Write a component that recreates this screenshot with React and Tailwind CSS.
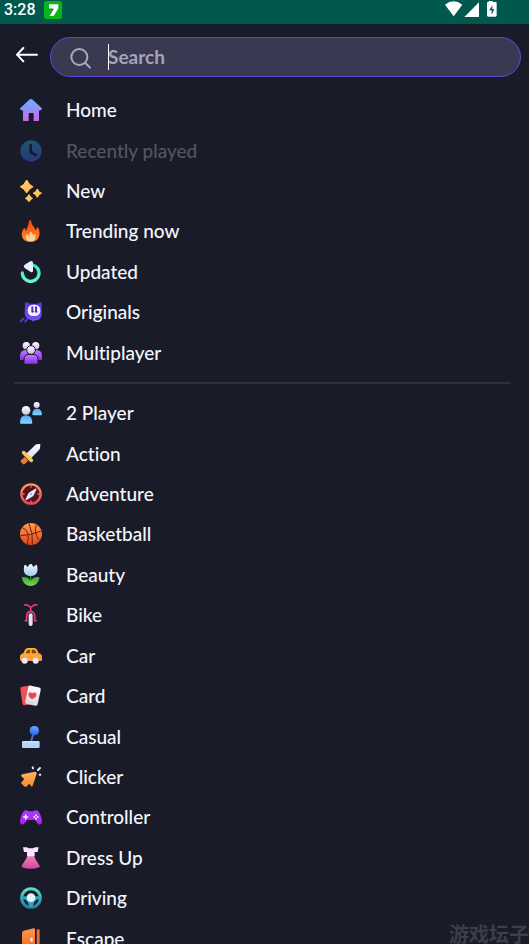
import React from "react";

const Gradient = ({ id, from, to, x2 = 0, y2 = 1 }) => (
  <linearGradient id={id} x1="0" y1="0" x2={x2} y2={y2}>
    <stop offset="0" stopColor={from} />
    <stop offset="1" stopColor={to} />
  </linearGradient>
);

// every menu drawing shares one 66 unit grid
const Icon = ({ children }) => (
  <svg viewBox="0 0 66 66" className="size-[22px] shrink-0" aria-hidden="true">
    {children}
  </svg>
);

const HomeIcon = () => (
  <Icon>
    <Gradient id="home" from="#62b4ff" to="#cb66ee" />
    <path fill="url(#home)" d="M28 2q5-4 10 0l26 24q4 4-1 7l-6 2v28q0 4-4 4H41V45q0-3-3-3H29q-3 0-3 3v22H13q-4 0-4-4V35l-6-2q-5-3-1-7Z" />
  </Icon>
);

const ClockIcon = () => (
  <Icon>
    <Gradient id="clock" from="#23536b" to="#233980" />
    <circle cx="33" cy="33" r="32" fill="url(#clock)" />
    <path d="M32 16v20l15 9" fill="none" stroke="#171a2c" strokeWidth="8" strokeLinecap="round" strokeLinejoin="round" />
  </Icon>
);

const SparklesIcon = () => (
  <Icon>
    <Gradient id="spark" from="#ffd35c" to="#ffb45c" x2={1} />
    <g fill="url(#spark)">
      <path d="M20 0q3 0 4 4 4 10 13 13 6 3 0 6-9 4-13 13-4 7-8 0-4-9-13-13-6-3 0-6 9-3 13-13 1-4 4-4Z" />
      <path d="M52 26q2 0 3 3 2 6 8 8 5 3 0 5-6 2-8 8-3 5-6 0-2-6-8-8-4-2 0-5 6-2 8-8 1-3 3-3Z" />
      <path d="M27 43q2 0 3 3 2 5 7 7 4 2 0 4-5 2-7 7-3 4-6 0-2-5-7-7-4-2 0-4 5-2 7-7 1-3 3-3Z" />
    </g>
  </Icon>
);

const FireIcon = () => (
  <Icon>
    <Gradient id="fire" from="#f4430f" to="#ff8b2b" />
    <Gradient id="flame" from="#ffc56d" to="#ffd9a4" />
    <path fill="url(#fire)" d="M30 1q4-1 4 4c1 11 10 15 13 26l4-8q2-3 4 0c10 21 0 43-23 43C9 66 1 49 7 33q2-5 5-8 3-2 4 2l2 6C23 22 25 14 27 4q1-3 3-3Z" />
    <path fill="url(#flame)" d="M31 35q2-2 4 1l5 10 4-4q2-1 2 2c2 12-3 19-14 19-12 0-17-8-13-19q2-3 4 0l3 3Z" />
  </Icon>
);

const UpdatedIcon = () => (
  <Icon>
    <Gradient id="upd" from="#37e6c4" to="#67f5ce" />
    <path d="M7 36a25 25 0 1 0 31-24" fill="none" stroke="url(#upd)" strokeWidth="10" strokeLinecap="round" />
    <path d="M14 11 31 1q8-3 8 5v23q0 7-7 4L14 21q-5-5 0-10Z" fill="#e4f0ff" />
  </Icon>
);

const OriginalsIcon = () => (
  <Icon>
    <Gradient id="orig" from="#5638e0" to="#7252ff" />
    <path fill="url(#orig)" d="M15 8q0-5 5-4l9 4h23l9-4q4-1 4 4v29c0 14-7 21-17 21q-6 0-8 3-4 2-5-4c-12-2-21-9-21-22Z" />
    <rect x="23" y="11" width="38" height="34" rx="16" fill="#f4f1ff" />
    <path d="M37 19v13m11-13v13" stroke="#4930bd" strokeWidth="6" strokeLinecap="round" />
    <path d="m39 31 4 2m7-2 3 2" stroke="#4930bd" strokeWidth="3" />
    <path d="m1 62 10-10m4 10 6-7" stroke="#5a3de0" strokeWidth="5" strokeLinecap="round" />
  </Icon>
);

const MultiplayerIcon = () => (
  <Icon>
    <Gradient id="mhead" from="#fff" to="#cbb7ee" />
    <Gradient id="mbody" from="#c180ff" to="#8929ec" />
    <g fill="url(#mhead)">
      <circle cx="19" cy="11" r="11" />
      <circle cx="47" cy="11" r="11" />
    </g>
    <path fill="url(#mbody)" d="M0 54V42q0-18 18-18h30q18 0 18 18v12Z" />
    <path fill="url(#mbody)" stroke="#1a1b28" strokeWidth="3" d="M12 67V53q0-16 16-16h10q16 0 16 16v14Z" />
    <circle cx="33" cy="24" r="13" fill="url(#mhead)" stroke="#1a1b28" strokeWidth="3" />
  </Icon>
);

const TwoPlayerIcon = () => (
  <Icon>
    <Gradient id="phead" from="#fff" to="#c9c7eb" />
    <Gradient id="pbody" from="#5aa6f3" to="#7cdbff" />
    <circle cx="18" cy="25" r="13" fill="url(#phead)" />
    <circle cx="50" cy="9" r="9" fill="url(#phead)" />
    <path fill="url(#pbody)" d="M0 62q0-22 18-22t19 22q0 3-3 3H3q-3 0-3-3Z" />
    <path fill="url(#pbody)" d="M37 37q0-17 14-17t15 17q0 3-3 3H40q-3 0-3-3Z" />
  </Icon>
);

const SwordIcon = () => (
  <Icon>
    <Gradient id="blade" from="#fff" to="#d3d8f2" />
    <path d="m14 42 11 11-11 10q-3 3-6-1l-5-4q-3-3 0-6Z" fill="#f17a28" />
    <path d="M18 33 45 7q3-3 6-3l7-1q4 0 3 4l-1 8q0 3-3 6L31 48Z" fill="url(#blade)" />
    <path d="m11 29 23 23" stroke="#ffc24f" strokeWidth="11" strokeLinecap="round" />
  </Icon>
);

const CompassIcon = () => (
  <Icon>
    <Gradient id="ring" from="#ff9a64" to="#e94855" />
    <circle cx="33" cy="33" r="29" fill="#521321" stroke="url(#ring)" strokeWidth="7" />
    <path d="M33 4v10m0 38v10M4 33h10m38 0h10" stroke="#e56a5b" strokeWidth="4" />
    <path d="M46 17q5-1 3 4L40 39 20 51q-5 1-3-4l9-18Z" fill="#e7e8fa" />
    <circle cx="33" cy="33" r="3" fill="#9fa0c6" />
  </Icon>
);

const BasketballIcon = () => (
  <Icon>
    <Gradient id="ball" from="#ff9a4d" to="#e4481c" />
    <circle cx="33" cy="33" r="33" fill="url(#ball)" />
    <path d="M2 38q30-1 62-14M27 1q13 30 10 65M7 14q25 9 15 49M49 5q-9 25 9 48" fill="none" stroke="#6b210f" strokeWidth="3" />
  </Icon>
);

const TulipIcon = () => (
  <Icon>
    <Gradient id="petal" from="#eefaff" to="#9fcbe4" />
    <Gradient id="leaf" from="#3aa83e" to="#78d84b" />
    <path d="M32 30v26" stroke="#3d9147" strokeWidth="4" />
    <path fill="url(#petal)" d="M13 4q2-4 5 0l5 5 6-8q3-3 6 0l6 8 5-5q3-4 5 0c5 20-2 32-19 32S8 24 13 4Z" />
    <path fill="url(#leaf)" d="M32 52c4-10 13-14 24-13q3 0 2 4C55 58 46 65 32 66 18 65 9 58 6 43q-1-4 2-4c11-1 20 3 24 13Z" />
  </Icon>
);

const BikeIcon = () => (
  <Icon>
    <g fill="none" stroke="#e83e78" strokeWidth="5" strokeLinecap="round" strokeLinejoin="round">
      <path d="M14 3q5-2 9 1l9 6 9-6q4-3 9-1M32 10v12M20 50V38q0-15 12-15t12 15v12" />
      <path d="M16 50h4m24 0h4" />
    </g>
    <rect x="26" y="28" width="12" height="38" rx="6" fill="#e4e2f3" />
  </Icon>
);

const CarIcon = () => (
  <Icon>
    <Gradient id="car" from="#ffb42e" to="#ff9b43" />
    <path fill="url(#car)" d="m10 25 5-11q3-5 9-5h18q6 0 9 5l5 11q10 2 10 11v8q0 4-4 4H4q-4 0-4-4v-9q0-8 10-10Z" />
    <path fill="#7c4713" d="m17 25 4-8q1-3 5-3h4v11Zm18-11h6q3 0 5 3l4 8H35Z" />
    <circle cx="14" cy="47" r="9" fill="#eceafa" />
    <circle cx="47" cy="47" r="9" fill="#eceafa" />
  </Icon>
);

const CardIcon = () => (
  <Icon>
    <Gradient id="card" from="#fff" to="#d8d6dc" />
    <rect x="4" y="3" width="36" height="56" rx="6" fill="#f0515a" transform="rotate(-8 22 31)" />
    <rect x="20" y="4" width="38" height="56" rx="6" fill="url(#card)" transform="rotate(12 39 32)" />
    <path d="M36 43q-14-9-10-18 4-6 11 0 8-6 12 1 3 9-13 17Z" fill="#ee4750" />
  </Icon>
);

const JoystickIcon = () => (
  <Icon>
    <Gradient id="knob" from="#65a9ff" to="#2963ee" />
    <path d="m41 18-8 31" stroke="#4a6fc4" strokeWidth="6" />
    <circle cx="43" cy="14" r="14" fill="url(#knob)" />
    <rect x="6" y="45" width="53" height="21" rx="4" fill="#b3d3fb" />
    <path d="M8 48h49" stroke="#d2e4ff" strokeWidth="4" />
  </Icon>
);

const ClickerIcon = () => (
  <Icon>
    <Gradient id="cursor" from="#ffb45c" to="#f08b2b" />
    <path fill="url(#cursor)" d="M7 25 44 17q7-1 6 6L38 59q-2 5-5 1l-5-7-9 9q-3 2-6-1l-8-7q-3-3 0-6l8-9-8-7q-4-5 2-7Z" />
    <path d="m38 4 1 3m15 5 6-6M59 26h2" stroke="#e5e9ff" strokeWidth="6" strokeLinecap="round" />
  </Icon>
);

const ControllerIcon = () => (
  <Icon>
    <Gradient id="pad" from="#a63bff" to="#b41dea" />
    <path fill="url(#pad)" d="M9 19q3-6 9-6 4 0 7 3h16q3-3 7-3 6 0 9 6c7 12 9 22 9 29 0 8-9 10-14 4l-5-7q-2-3-5-3H24q-3 0-5 3l-5 7C9 58 0 56 0 48c0-7 2-17 9-29Z" />
    <path d="M17 27v12m-6-6h12" stroke="#f7e6ff" strokeWidth="5" strokeLinecap="round" />
    <g fill="#f7e6ff">
      <circle cx="48" cy="28" r="3" />
      <circle cx="48" cy="38" r="3" />
      <circle cx="43" cy="33" r="3" />
      <circle cx="53" cy="33" r="3" />
    </g>
  </Icon>
);

const DressIcon = () => (
  <Icon>
    <Gradient id="skirt" from="#ef7fc0" to="#cc4b9b" />
    <path fill="url(#skirt)" d="M22 26h20c3 12 12 19 17 31q1 3-2 4-25 9-50 0-3-1-2-4C10 45 19 38 22 26Z" />
    <path fill="#fbe4ff" d="M9 1h11l6 3h13l6-3h11l-3 14h-9v13H21V15h-9Z" />
  </Icon>
);

const WheelIcon = () => (
  <Icon>
    <Gradient id="wheel" from="#58dfc5" to="#247ba7" />
    <circle cx="33" cy="33" r="28" fill="none" stroke="url(#wheel)" strokeWidth="9" />
    <path fill="#36a3b3" d="M7 28h52v8q-18 1-20 24H27Q25 37 7 36Z" />
    <circle cx="33" cy="32" r="13" fill="#def5ff" />
  </Icon>
);

const DoorIcon = () => (
  <Icon>
    <Gradient id="door" from="#ff9552" to="#ef6a1c" />
    <path fill="url(#door)" d="M6 14q0-5 5-6l30-7q4 0 4 4v61H6Z" />
    <rect x="50" y="4" width="9" height="62" rx="3" fill="#e96f2c" />
    <rect x="31" y="29" width="7" height="12" rx="3" fill="#ffe6cf" />
  </Icon>
);

const mainLinks = [
  { label: "Home", icon: HomeIcon },
  { label: "Recently played", icon: ClockIcon, disabled: true },
  { label: "New", icon: SparklesIcon },
  { label: "Trending now", icon: FireIcon },
  { label: "Updated", icon: UpdatedIcon },
  { label: "Originals", icon: OriginalsIcon },
  { label: "Multiplayer", icon: MultiplayerIcon },
];

const categories = [
  { label: "2 Player", icon: TwoPlayerIcon },
  { label: "Action", icon: SwordIcon },
  { label: "Adventure", icon: CompassIcon },
  { label: "Basketball", icon: BasketballIcon },
  { label: "Beauty", icon: TulipIcon },
  { label: "Bike", icon: BikeIcon },
  { label: "Car", icon: CarIcon },
  { label: "Card", icon: CardIcon },
  { label: "Casual", icon: JoystickIcon },
  { label: "Clicker", icon: ClickerIcon },
  { label: "Controller", icon: ControllerIcon },
  { label: "Dress Up", icon: DressIcon },
  { label: "Driving", icon: WheelIcon },
  { label: "Escape", icon: DoorIcon },
];

const MenuItem = ({ label, icon: ItemIcon, disabled }) => (
  <li className="flex">
    <a
      href="#"
      aria-disabled={disabled}
      className={`flex flex-1 items-center gap-6 px-5 ${disabled ? "text-[#54555f]" : "text-[#f5f6fc]"}`}
    >
      <ItemIcon />
      <span>{label}</span>
    </a>
  </li>
);

const StatusBar = () => (
  <header className="flex h-6 shrink-0 items-start justify-between bg-[#00594c] pr-8 pl-1 text-white">
    <div className="flex items-center gap-2">
      <span className="font-[Roboto] text-base leading-5 font-medium">3:28</span>
      <svg viewBox="0 0 54 54" className="size-[18px]" aria-hidden="true">
        <rect width="54" height="54" rx="8" fill="#08b51b" />
        <path d="M15 10h28v12L29 45H16l12-22H15Z" fill="#fff" />
        <path d="M13 24h15L17 43" fill="none" stroke="#067b12" strokeWidth="2" />
      </svg>
    </div>
    <svg viewBox="0 0 156 54" className="h-[18px] w-[52px]" fill="#fff" aria-hidden="true">
      <path d="M0 14q26-20 52 0L26 49Z" />
      <path d="M58 51 102 7v44Z" />
      <path d="M131 6V3h12v3h9q3 0 3 3v37q0 4-4 4h-21q-4 0-4-4V9q0-3 3-3Z" />
      <path d="m142 16-9 15h7v13l8-16h-6Z" fill="#00594c" />
    </svg>
  </header>
);

const SearchBar = () => (
  <div className="flex items-center gap-3 pt-[13px] pr-2 pb-[13px] pl-4">
    <button type="button" aria-label="Back" className="shrink-0 pb-1">
      <svg viewBox="0 0 66 48" className="h-4 w-[22px]" fill="none" stroke="#fff" strokeWidth="6" strokeLinecap="round" strokeLinejoin="round">
        <path d="M63 23H3M22 3 3 23l19 20" />
      </svg>
    </button>
    <label className="relative flex h-10 flex-1 items-center rounded-full border border-[#6442d6] bg-[#3a3952] pl-[19px]">
      <svg viewBox="0 0 66 66" className="mt-1 size-[22px] shrink-0" fill="none" stroke="#aaaabd" strokeWidth="6" strokeLinecap="round" aria-hidden="true">
        <circle cx="28" cy="27" r="24" />
        <path d="m46 45 14 14" />
      </svg>
      <span className="absolute left-[57px] h-[26px] w-px bg-white" />
      <input
        type="text"
        aria-label="Search"
        placeholder="Search"
        className="ml-4 min-w-0 flex-1 bg-transparent font-bold caret-transparent outline-none placeholder:text-[#a5a5b9]"
      />
    </label>
  </div>
);

const App = () => {
  return (
    <div className="relative flex h-screen flex-col overflow-hidden bg-[#1a1b28] font-[Lato,'Noto_Sans_CJK_SC',sans-serif] text-[19px] leading-7 font-medium [font-variant-ligatures:none]">
      <StatusBar />
      <SearchBar />
      <nav className="min-h-0 flex-1 overflow-y-auto [scrollbar-width:none]">
        <ul className="grid min-h-[283px] auto-rows-fr">
          {mainLinks.map((item) => (
            <MenuItem key={item.label} {...item} />
          ))}
        </ul>
        <hr className="mt-[9px] mr-[18px] mb-[9px] ml-[14px] border-t-2 border-[#2f303d]" />
        <ul className="grid min-h-[566px] auto-rows-fr">
          {categories.map((item) => (
            <MenuItem key={item.label} {...item} />
          ))}
        </ul>
      </nav>
      {/* site mark over the corner of the list */}
      <span className="absolute right-0 bottom-0 text-xl leading-5 font-bold text-[#3d3e4b]">
        游戏坛子
      </span>
    </div>
  );
};

export default App;
